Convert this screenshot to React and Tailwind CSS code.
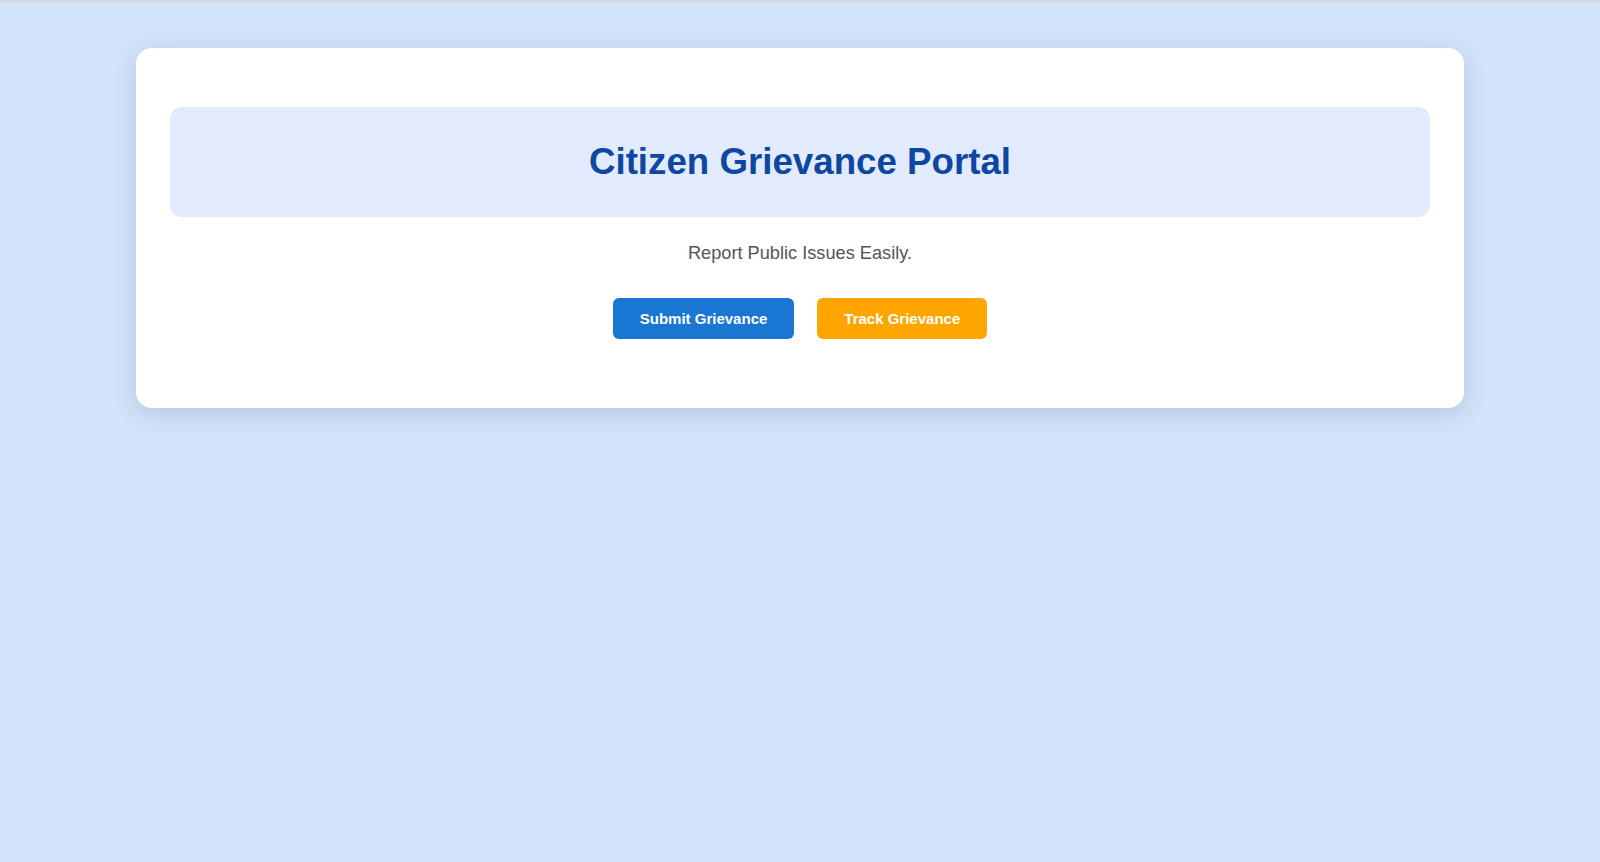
export default function App() {
  return (
    <div
      className="min-h-[862px] w-full bg-[#d0e3f8] border-t-2 border-[#d3d6da]"
      style={{ fontFamily: '"Liberation Sans", Arial, sans-serif' }}
    >
      <div className="pt-[46px] flex justify-center">
        <div className="w-[1328px] bg-white rounded-[16px] shadow-[0_6px_22px_rgba(40,70,110,0.16)] px-[34px] pt-[59px] pb-[69px]">
          <div className="bg-[#e1ebfd] rounded-[12px] h-[110px] flex items-center justify-center">
            <h1 className="text-[36.7px] leading-[42px] font-bold text-[#0d47a1]">
              Citizen Grievance Portal
            </h1>
          </div>
          <p className="mt-[26px] text-center text-[18.2px] leading-[21px] text-[#555555]">
            Report Public Issues Easily.
          </p>
          <div className="mt-[34px] flex justify-center gap-[23px]">
            <button className="h-[41px] px-[27px] rounded-[6px] bg-[#1976d2] text-white text-[15px] font-bold leading-[17px]">
              Submit Grievance
            </button>
            <button className="h-[41px] px-[27px] rounded-[6px] bg-[#ffa500] text-white text-[15px] font-bold leading-[17px]">
              Track Grievance
            </button>
          </div>
        </div>
      </div>
    </div>
  );
}
